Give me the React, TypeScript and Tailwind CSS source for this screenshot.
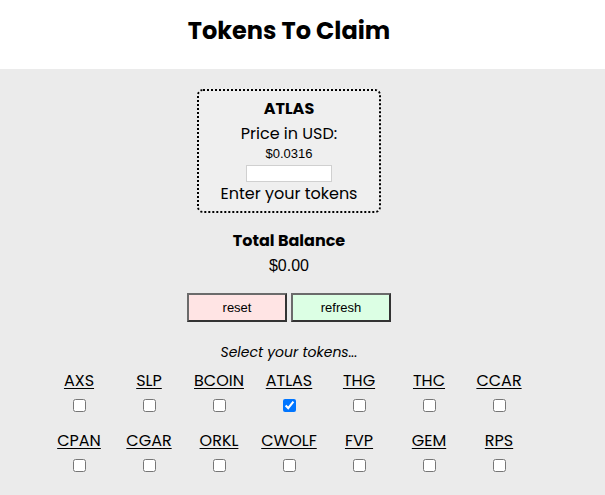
import React from 'react';

const row1 = ['AXS', 'SLP', 'BCOIN', 'ATLAS', 'THG', 'THC', 'CCAR'];
const row2 = ['CPAN', 'CGAR', 'ORKL', 'CWOLF', 'FVP', 'GEM', 'RPS'];

const pop = { fontFamily: 'Poppins, Inter, "Noto Sans", sans-serif' };
const arial = { fontFamily: '"Liberation Sans", Arial, sans-serif' };

function TokenRow({ names, checked }: { names: string[]; checked?: string }) {
  return (
    <div className="grid grid-cols-7 w-[490px]">
      {names.map((n) => (
        <div key={n} className="flex flex-col items-center">
          <a className="text-[16px] leading-[22px] text-black underline underline-offset-2" style={pop}>
            {n}
          </a>
          <input type="checkbox" defaultChecked={n === checked} className="mt-[7px] w-[13px] h-[13px] m-0" />
        </div>
      ))}
    </div>
  );
}

export default function App() {
  return (
    <div className="w-[605px] h-[495px] bg-[#ebebeb] text-black" style={pop}>
      {/* Header */}
      <div className="bg-white h-[69px] w-full">
        <div className="w-[578px] h-full flex items-center justify-center">
          <h1 className="text-[24px] font-bold pb-[7px]">Tokens To Claim</h1>
        </div>
      </div>

      <div className="w-[578px] flex flex-col items-center pt-[20px]">
        {/* Token card */}
        <div className="w-[184px] h-[124px] border-2 border-dotted border-black rounded-[6px] bg-[#efefef] flex flex-col items-center pt-[7px]">
          <div className="text-[16px] font-bold leading-[22px]">ATLAS</div>
          <div className="text-[16px] leading-[22px] mt-[3px]">Price in USD:</div>
          <div className="text-[13px] leading-[18px]" style={arial}>
            $0.0316
          </div>
          <input className="w-[86px] h-[17px] bg-white border border-[#d0d0d0] mt-[2px]" />
          <div className="text-[16px] leading-[22px] mt-[1px]">Enter your tokens</div>
        </div>

        {/* Balance */}
        <div className="text-[16px] font-bold leading-[22px] mt-[17px]">Total Balance</div>
        <div className="text-[16px] leading-[22px] mt-[3px]" style={arial}>
          $0.00
        </div>

        <div className="flex gap-[4px] mt-[16px]" style={arial}>
          <button className="w-[100px] h-[29px] bg-[#ffe4e4] border-2 border-[#333] border-t-[#6b6b6b] border-l-[#6b6b6b] text-[13px]">
            reset
          </button>
          <button className="w-[100px] h-[29px] bg-[#dcffe4] border-2 border-[#333] border-t-[#6b6b6b] border-l-[#6b6b6b] text-[13px]">
            refresh
          </button>
        </div>

        <div className="italic text-[14px] leading-[20px] mt-[20px]">Select your tokens...</div>

        <div className="mt-[8px]">
          <TokenRow names={row1} checked="ATLAS" />
        </div>
        <div className="mt-[18px]">
          <TokenRow names={row2} />
        </div>
      </div>
    </div>
  );
}
